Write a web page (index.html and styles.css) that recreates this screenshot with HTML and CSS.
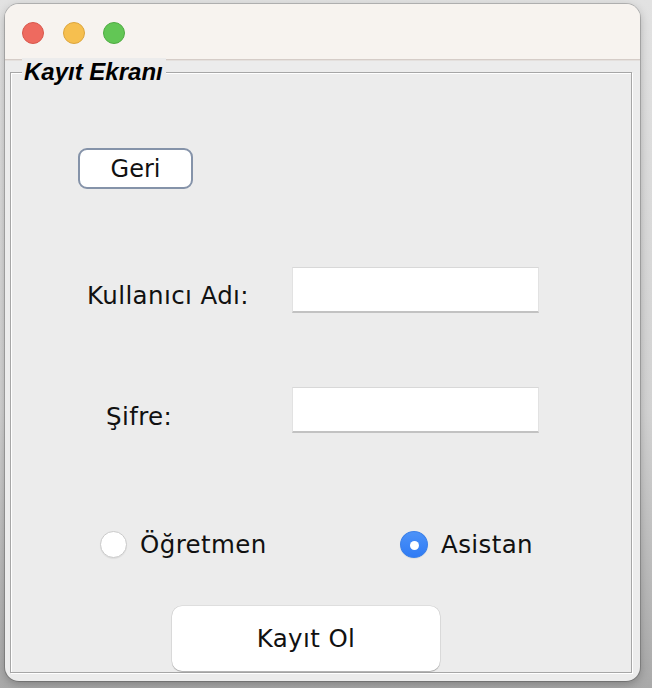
FILE: index.html
```html
<!DOCTYPE html>
<html lang="tr">
<head>
<meta charset="utf-8">
<title>Kayıt Ekranı</title>
<link rel="stylesheet" href="styles.css">
</head>
<body>
<div class="desktop">
  <div class="window">
    <div class="titlebar">
      <span class="light red"></span>
      <span class="light yellow"></span>
      <span class="light green"></span>
    </div>
    <div class="content">
      <div class="group">
        <span class="legend">Kayıt Ekranı</span>
        <div class="back-row">
          <button class="btn-back">Geri</button>
        </div>
        <div class="field-row row-user">
          <label class="label label-user">Kullanıcı Adı:</label>
          <input class="field" type="text">
        </div>
        <div class="field-row row-pass">
          <label class="label label-pass">Şifre:</label>
          <input class="field" type="password">
        </div>
        <div class="radio-row">
          <label class="radio"><span class="radio-dot"></span><span class="radio-text">Öğretmen</span></label>
          <label class="radio"><span class="radio-dot checked"></span><span class="radio-text">Asistan</span></label>
        </div>
        <div class="submit-row">
          <button class="btn-submit">Kayıt Ol</button>
        </div>
      </div>
    </div>
  </div>
</div>
</body>
</html>
```
FILE: styles.css
```css
* { box-sizing: border-box; }
html, body { margin: 0; padding: 0; }
body {
  width: 652px;
  height: 688px;
  overflow: hidden;
  background: #d8d8d8;
  font-family: "DejaVu Sans", sans-serif;
  color: #111;
}
.desktop {
  height: 688px;
  padding: 4px 12px 7px 5px;
  background: linear-gradient(to bottom, #e2e2e2 0, #d2d2d2 60%, #a9a9a9 100%);
}
.window {
  width: 635px;
  height: 677px;
  border-radius: 14px;
  overflow: hidden;
  background: #ececec;
  box-shadow: 0 0 0 1px rgba(0,0,0,0.18), 0 3px 10px rgba(0,0,0,0.25);
  display: flex;
  flex-direction: column;
}
.titlebar {
  height: 56px;
  flex: none;
  background: #f7f3ef;
  border-bottom: 1px solid #d5ccc7;
  box-shadow: 0 1px 0 #e4e0dd;
  display: flex;
  align-items: flex-start;
  gap: 18.5px;
  padding: 18px 0 0 17px;
}
.light {
  width: 22px;
  height: 22px;
  border-radius: 50%;
  display: block;
}
.red { background: #ee6a5f; border: 1px solid #d8574c; }
.yellow { background: #f6bf4f; border: 1px solid #dca53c; }
.green { background: #62c655; border: 1px solid #4fab42; }

.content {
  flex: 1;
  padding: 12px 8px 8px 5px;
}
.group {
  position: relative;
  height: 601px;
  border: 1px solid #a6a6a6;
  box-shadow: inset 1px 1px 0 #fff, 1px 1px 0 #fff;
  display: flex;
  flex-direction: column;
}
.legend {
  position: absolute;
  top: -15px;
  left: 11px;
  padding: 0 3px 0 2px;
  background: #ececec;
  font-family: "Liberation Sans", Arial, sans-serif;
  font-weight: bold;
  font-style: italic;
  font-size: 24px;
  line-height: 28px;
  color: #000;
}
.back-row {
  padding: 75px 0 0 67px;
}
.btn-back {
  width: 115px;
  height: 41px;
  background: #fff;
  border: 2px solid #8593a9;
  border-radius: 9px;
  font-family: "DejaVu Sans", sans-serif;
  font-size: 24px;
  color: #111;
  padding: 0;
  margin: 0;
}
.field-row {
  display: grid;
  grid-template-columns: 281px 247px;
  align-items: center;
  height: 46px;
}
.row-user { margin-top: 78px; }
.row-pass { margin-top: 74px; }
.label {
  font-size: 24.5px;
  letter-spacing: 0.4px;
  line-height: 28px;
}
.label-user { padding-left: 76px; padding-top: 12px; }
.label-pass { padding-left: 95px; padding-top: 14px; }
.field {
  width: 247px;
  height: 46px;
  margin: 0;
  background: #fff;
  border: 1px solid #e2e2e2;
  border-top-color: #d8d8d8;
  border-bottom: 2px solid #c2c2c2;
  border-radius: 0;
  outline: none;
}
.radio-row {
  margin-top: 97px;
  padding-left: 89px;
  display: grid;
  grid-template-columns: 300px auto;
  height: 27px;
}
.radio {
  display: flex;
  align-items: center;
  gap: 13px;
  font-size: 24.5px;
  letter-spacing: 0.4px;
  line-height: 27px;
}
.radio-text { padding-top: 1px; }
.radio-dot {
  width: 27px;
  height: 27px;
  border-radius: 50%;
  background: #fff;
  border: 1px solid #cacaca;
  box-shadow: 0 1px 1px rgba(0,0,0,0.06);
  position: relative;
  flex: none;
}
.radio-dot.checked {
  background: linear-gradient(#4c92f8, #2f7bf5);
  border-color: #3a7fe8;
  width: 28px;
}
.radio-dot.checked::after {
  content: "";
  position: absolute;
  left: 9px;
  top: 9px;
  width: 9px;
  height: 9px;
  border-radius: 50%;
  background: #fff;
}
.submit-row {
  margin-top: 49px;
  padding-left: 161px;
}
.btn-submit {
  width: 268px;
  height: 65px;
  background: #fff;
  border: none;
  border-radius: 10px;
  box-shadow: 0 0 0 0.5px rgba(0,0,0,0.12), 0 1px 1px rgba(0,0,0,0.2);
  font-family: "DejaVu Sans", sans-serif;
  font-size: 24.5px;
  letter-spacing: 0.4px;
  color: #111;
  padding: 0;
  margin: 0;
}
```
